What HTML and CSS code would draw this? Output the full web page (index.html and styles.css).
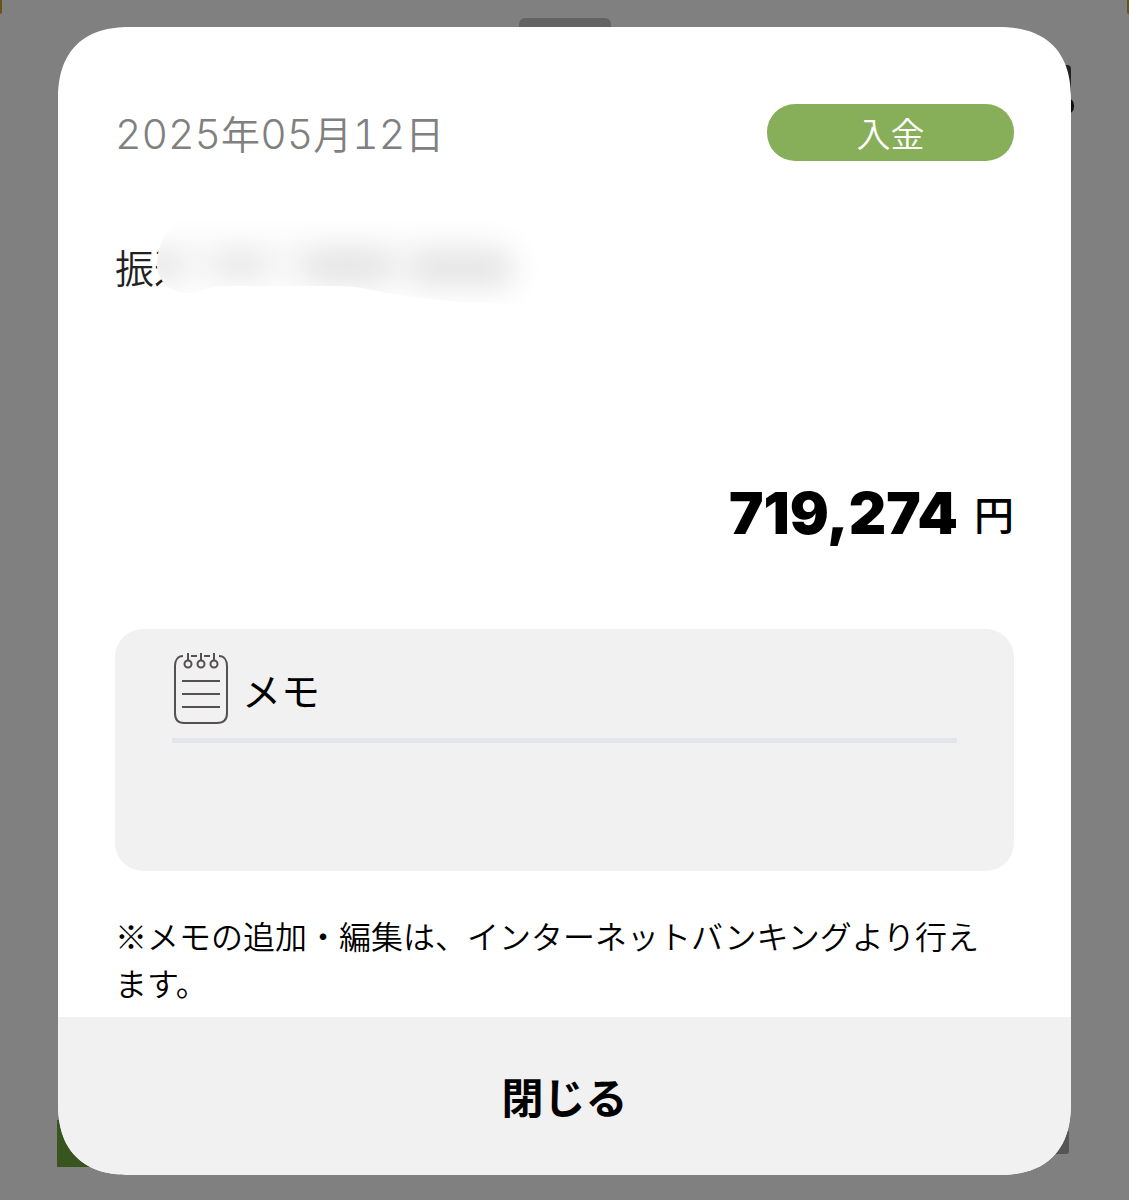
FILE: index.html
```html
<!DOCTYPE html>
<html lang="ja">
<head>
<meta charset="utf-8">
<meta name="viewport" content="width=device-width, initial-scale=1">
<title>入金明細</title>
<link rel="stylesheet" href="styles.css">
</head>
<body>
<div class="backdrop" aria-hidden="true">
  <span class="edge edge-left"></span>
  <span class="edge edge-right"></span>
  <span class="handle"></span>
  <span class="peek peek-icon"></span>
  <span class="peek peek-dot"></span>
  <span class="peek peek-green"></span>
  <span class="peek peek-gray"></span>
</div>
<main class="dialog" role="dialog" aria-modal="true">
  <div class="content">
    <header class="top">
      <time class="date" datetime="2025-05-12"><span class="num">2025</span>年<span class="num">05</span>月<span class="num">12</span>日</time>
      <span class="badge">入金</span>
    </header>
    <p class="payee">振込
      <svg class="smudge" viewBox="0 0 460 100" aria-hidden="true">
        <defs>
          <filter id="soft" x="-30%" y="-60%" width="160%" height="220%"><feGaussianBlur stdDeviation="15"/></filter>
          <clipPath id="shape"><path d="M75 4C62 15 57 30 57 46C58 62 72 74 90 73C100 72 108 67 120 66H235C260 66 275 71 300 75C340 81 375 83 410 84L455 84V0H75Z"/></clipPath>
        </defs>
        <g clip-path="url(#shape)">
          <rect width="460" height="100" fill="#fff"/>
          <g filter="url(#soft)" fill="#e3e3e3">
            <rect x="40" y="32" width="40" height="28"/>
            <rect x="115" y="34" width="50" height="22"/>
            <rect x="205" y="30" width="85" height="34"/>
            <rect x="312" y="32" width="100" height="34"/>
            <rect x="60" y="20" width="340" height="44" opacity=".3"/>
          </g>
        </g>
      </svg>
    </p>
    <p class="amount"><strong class="value">719,274</strong><span class="yen">円</span></p>
    <section class="memo">
      <h2 class="memo-title">
        <svg class="note" viewBox="0 0 56 72" fill="none" stroke="#555052" stroke-width="2" aria-hidden="true">
          <path d="M11 3C6 3 3 7 3 13V60C3 67 6 70 12 70H45C52 70 55 67 55 60V13C55 7 52 3 47 3M19 3H25M32 3H38"/>
          <path d="M10 28H48M10 41H48M10 54H48"/>
          <path d="M16 0V8M29 0V8M42 0V8"/>
          <circle cx="16" cy="11" r="3.5"/><circle cx="29" cy="11" r="3.5"/><circle cx="42" cy="11" r="3.5"/>
        </svg>
        メモ
      </h2>
    </section>
    <p class="hint">※メモの追加・編集は、インターネットバンキングより行えます。</p>
  </div>
  <button class="close" type="button">閉じる</button>
</main>
</body>
</html>
```
FILE: styles.css
```css
* { box-sizing: border-box; }

body {
  margin: 0;
  min-height: 100vh;
  padding: 27px 58px 24px;
  background: #808080;
  color: #000;
  font-family: "Noto Sans CJK JP", sans-serif;
}

p, h2 { margin: 0; }

/* dimmed screen behind the dialog */
.backdrop { position: absolute; inset: 0; overflow: hidden; }
.backdrop span { position: absolute; }
.edge { top: 0; width: 2px; height: 14px; background: #6b5218; }
.edge-left { left: 0; border-radius: 0 0 2px 0; }
.edge-right { right: 0; border-radius: 0 0 0 2px; }
.handle {
  top: 18px;
  left: calc(50% - 46px);
  width: 92px;
  height: 16px;
  border-radius: 6px;
  background: #636363;
}
.peek-icon { top: 65px; right: 58px; width: 14px; height: 30px; border-radius: 4px; background: #222; }
.peek-dot { top: 98px; right: 55px; width: 14px; height: 16px; border-radius: 8px; background: #111; }
.peek-green { top: 1120px; left: 57px; width: 60px; height: 47px; background: #38541f; }
.peek-gray { top: 1130px; right: 60px; width: 40px; height: 24px; border-radius: 3px; background: #555; }

.dialog {
  position: relative;
  display: flex;
  flex-direction: column;
  overflow: hidden;
  border-radius: 74px;
  corner-shape: superellipse(1.3);
  background: #fff;
}

.content { padding: 77px 57px 11px; }

.top { display: flex; align-items: center; justify-content: space-between; }

.date {
  color: #808080;
  font-size: 39px;
  font-weight: 350;
  line-height: 54px;
  white-space: nowrap;
}
.num { font-family: Inter, sans-serif; font-size: 41px; font-weight: 300; font-variant-numeric: tabular-nums; }

.badge {
  width: 247px;
  border-radius: 28px;
  background: #87ae58;
  color: #fff;
  font-size: 34px;
  font-weight: 350;
  line-height: 57px;
  text-align: center;
}

.payee {
  position: relative;
  margin-top: 77px;
  color: #222;
  font-size: 39px;
  font-weight: 350;
  line-height: 56px;
}
.smudge { position: absolute; top: -18px; left: -15px; width: 460px; height: 100px; }

.amount {
  display: flex;
  align-items: center;
  justify-content: flex-end;
  gap: 16px;
  margin-top: 183px;
  line-height: 72px;
}
.value { font-family: Inter, sans-serif; font-size: 58px; font-weight: 900; }
.yen { font-size: 40px; font-weight: 500; }

.memo {
  min-height: 242px;
  margin-top: 80px;
  padding: 24px 57px;
  border-radius: 28px;
  background: #f1f1f1;
}
.memo-title {
  display: flex;
  align-items: center;
  gap: 14px;
  padding-bottom: 13px;
  border-bottom: 5px solid #e4e4ec;
  font-size: 39px;
  font-weight: 400;
  line-height: 68px;
}
.note { width: 56px; height: 72px; }

.hint { margin-top: 41px; padding-right: 32px; font-size: 32px; font-weight: 350; line-height: 47px; }

.close {
  padding: 43px 20px;
  border: 0;
  background: #f1f1f1;
  color: #000;
  font: 700 42px/72px "Noto Sans CJK JP", sans-serif;
  cursor: pointer;
}
```
